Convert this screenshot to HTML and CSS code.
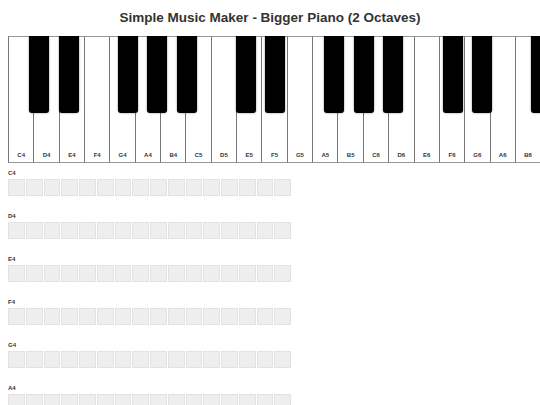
FILE: index.html
```html
<!DOCTYPE html>
<html>
<head>
<meta charset="utf-8">
<title>Simple Music Maker</title>
<link rel="stylesheet" href="styles.css">
</head>
<body>
<h1 class="title">Simple Music Maker - Bigger Piano (2 Octaves)</h1>
<div class="piano">
  <div class="white-key"><span class="key-label">C4</span></div>
  <div class="white-key"><span class="key-label">D4</span></div>
  <div class="white-key"><span class="key-label">E4</span></div>
  <div class="white-key"><span class="key-label">F4</span></div>
  <div class="white-key"><span class="key-label">G4</span></div>
  <div class="white-key"><span class="key-label">A4</span></div>
  <div class="white-key"><span class="key-label">B4</span></div>
  <div class="white-key"><span class="key-label">C5</span></div>
  <div class="white-key"><span class="key-label">D5</span></div>
  <div class="white-key"><span class="key-label">E5</span></div>
  <div class="white-key"><span class="key-label">F5</span></div>
  <div class="white-key"><span class="key-label">G5</span></div>
  <div class="white-key"><span class="key-label">A5</span></div>
  <div class="white-key"><span class="key-label">B5</span></div>
  <div class="white-key"><span class="key-label">C6</span></div>
  <div class="white-key"><span class="key-label">D6</span></div>
  <div class="white-key"><span class="key-label">E6</span></div>
  <div class="white-key"><span class="key-label">F6</span></div>
  <div class="white-key"><span class="key-label">G6</span></div>
  <div class="white-key"><span class="key-label">A6</span></div>
  <div class="white-key"><span class="key-label">B6</span></div>
  <div class="black-key" style="left:21px"></div>
  <div class="black-key" style="left:50.5px"></div>
  <div class="black-key" style="left:109.6px"></div>
  <div class="black-key" style="left:139.2px"></div>
  <div class="black-key" style="left:168.7px"></div>
  <div class="black-key" style="left:227.7px"></div>
  <div class="black-key" style="left:257.3px"></div>
  <div class="black-key" style="left:316.3px"></div>
  <div class="black-key" style="left:345.9px"></div>
  <div class="black-key" style="left:375.4px"></div>
  <div class="black-key" style="left:434.5px"></div>
  <div class="black-key" style="left:464px"></div>
  <div class="black-key" style="left:523px"></div>
</div>
<div class="sequencer">
  <div class="track">
    <div class="track-label">C4</div>
    <div class="cells"><div class="cell"></div><div class="cell"></div><div class="cell"></div><div class="cell"></div><div class="cell"></div><div class="cell"></div><div class="cell"></div><div class="cell"></div><div class="cell"></div><div class="cell"></div><div class="cell"></div><div class="cell"></div><div class="cell"></div><div class="cell"></div><div class="cell"></div><div class="cell"></div></div>
  </div>
  <div class="track">
    <div class="track-label">D4</div>
    <div class="cells"><div class="cell"></div><div class="cell"></div><div class="cell"></div><div class="cell"></div><div class="cell"></div><div class="cell"></div><div class="cell"></div><div class="cell"></div><div class="cell"></div><div class="cell"></div><div class="cell"></div><div class="cell"></div><div class="cell"></div><div class="cell"></div><div class="cell"></div><div class="cell"></div></div>
  </div>
  <div class="track">
    <div class="track-label">E4</div>
    <div class="cells"><div class="cell"></div><div class="cell"></div><div class="cell"></div><div class="cell"></div><div class="cell"></div><div class="cell"></div><div class="cell"></div><div class="cell"></div><div class="cell"></div><div class="cell"></div><div class="cell"></div><div class="cell"></div><div class="cell"></div><div class="cell"></div><div class="cell"></div><div class="cell"></div></div>
  </div>
  <div class="track">
    <div class="track-label">F4</div>
    <div class="cells"><div class="cell"></div><div class="cell"></div><div class="cell"></div><div class="cell"></div><div class="cell"></div><div class="cell"></div><div class="cell"></div><div class="cell"></div><div class="cell"></div><div class="cell"></div><div class="cell"></div><div class="cell"></div><div class="cell"></div><div class="cell"></div><div class="cell"></div><div class="cell"></div></div>
  </div>
  <div class="track">
    <div class="track-label">G4</div>
    <div class="cells"><div class="cell"></div><div class="cell"></div><div class="cell"></div><div class="cell"></div><div class="cell"></div><div class="cell"></div><div class="cell"></div><div class="cell"></div><div class="cell"></div><div class="cell"></div><div class="cell"></div><div class="cell"></div><div class="cell"></div><div class="cell"></div><div class="cell"></div><div class="cell"></div></div>
  </div>
  <div class="track">
    <div class="track-label">A4</div>
    <div class="cells"><div class="cell"></div><div class="cell"></div><div class="cell"></div><div class="cell"></div><div class="cell"></div><div class="cell"></div><div class="cell"></div><div class="cell"></div><div class="cell"></div><div class="cell"></div><div class="cell"></div><div class="cell"></div><div class="cell"></div><div class="cell"></div><div class="cell"></div><div class="cell"></div></div>
  </div>
</div>
</body>
</html>
```
FILE: styles.css
```css
html {
  overflow: hidden;
  background: #fff;
}
body {
  margin: 8px 0 8px 8px;
  padding-right: 8px;
  background: #fff;
  font-family: "Liberation Sans", Arial, sans-serif;
  color: #333;
}
.title {
  margin: -8px 0 0 0;
  padding-top: 9px;
  height: 36px;
  box-sizing: border-box;
  font-size: 13.5px;
  line-height: 17px;
  font-weight: bold;
  text-align: center;
  color: #333;
}
.piano {
  position: relative;
  display: flex;
  margin-right: -8px;
  overflow: hidden;
}
.white-key {
  flex: 0 0 25.35px;
  width: 25.35px;
  height: 127px;
  box-sizing: border-box;
  border-left: 1px solid #777;
  border-top: 1px solid #999;
  border-bottom: 1px solid #999;
  background: #fff;
  display: flex;
  flex-direction: column;
  justify-content: flex-end;
  align-items: center;
  padding-bottom: 4px;
}
.key-label {
  font-size: 6px;
  line-height: 6px;
  font-weight: bold;
  color: #333;
}
.black-key {
  position: absolute;
  top: 0;
  width: 20px;
  height: 77px;
  background: #000;
  border-radius: 0 0 3px 3px;
  box-shadow: 0 0 2px rgba(0, 0, 0, 0.5);
}
.sequencer {
  display: flex;
  flex-direction: column;
  padding-top: 6px;
}
.track {
  display: flex;
  flex-direction: column;
  margin-bottom: 16px;
}
.track-label {
  font-size: 6px;
  line-height: 8px;
  font-weight: bold;
  color: #333;
  margin-bottom: 2px;
}
.cells {
  display: grid;
  grid-template-columns: repeat(16, 16.75px);
  gap: 1px;
}
.cell {
  height: 17px;
  box-sizing: border-box;
  background: #eee;
  border: 1px solid #e2e2e2;
}
```
